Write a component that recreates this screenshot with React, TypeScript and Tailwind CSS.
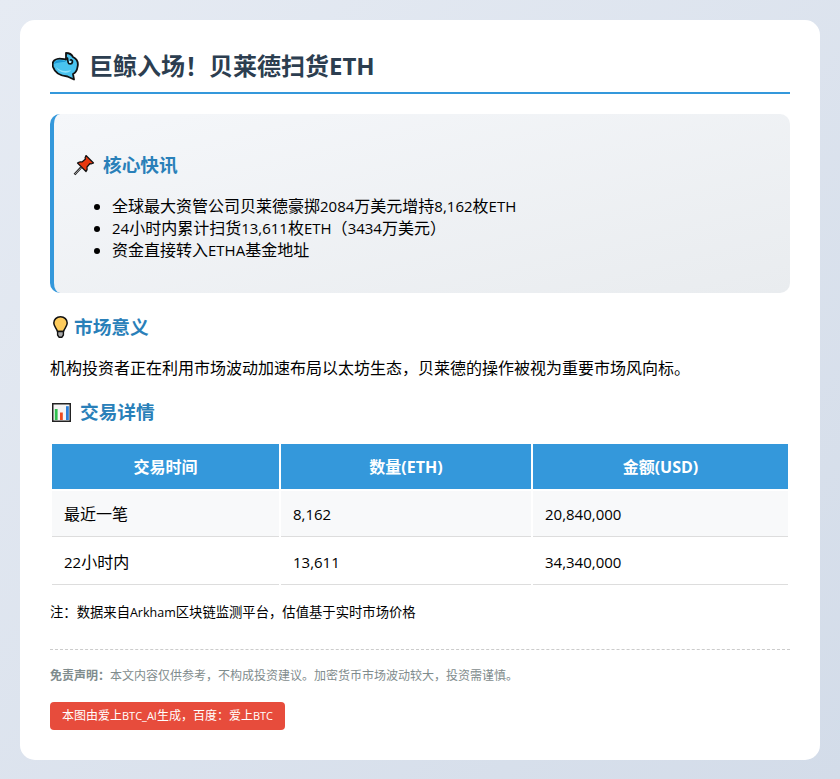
const FONT = "font-['Open_Sans','Noto_Sans_CJK_SC',sans-serif]";

function Whale() {
  return (
    <svg width="28" height="29" viewBox="0 0 28 29" className="ml-[2px] shrink-0">
      <path d="M14 7.5 L14 1 C18 1 20 3 21 5 C25 7 26.5 11 25.5 15 C25 19 23 21 21 22 L22 27.5 L15.5 24.5 C9 24 3 21 1 15 C0 11 1.5 8 5 7 C8 6 11 7 14 7.5 Z" fill="#49c3ef" stroke="#111" strokeWidth="1.8" strokeLinejoin="round" />
      <path d="M2 12 C2.5 9 5 8 8 8 C11 8 13 9 14 10 C10 10 5 10.5 2 12 Z" fill="#1c9ad6" />
      <path d="M4 15 C8 19 13 20 19 18 C17 22 8 22 4 15 Z" fill="#8fe2fb" />
      <path d="M15.5 6 L16 10 C16.5 12.5 20 12.5 20.5 10 C20.8 8.5 19.5 7.5 18.5 8" fill="none" stroke="#111" strokeWidth="1.6" strokeLinecap="round" />
      <circle cx="18" cy="10" r="0.9" fill="#fff" />
    </svg>
  );
}
function Pin() {
  return (
    <svg width="22" height="22" viewBox="0 0 22 22" className="shrink-0">
      <path d="M1.5 20.5 L8 13.5" stroke="#222" strokeWidth="2.4" />
      <path d="M1.8 20.2 L8 13.8" stroke="#bbb" strokeWidth="0.8" />
      <path d="M13 1.5 L20.5 9 L18 10 L17 9.5 L14 13 C14.5 15 14 16.5 13 17.5 L4.5 9 C6 8 7.5 7.5 9 8 L12.5 5 L12 4 Z" fill="#e8380f" stroke="#111" strokeWidth="1.2" strokeLinejoin="round" />
    </svg>
  );
}
function Bulb() {
  return (
    <svg width="15" height="22" viewBox="0 0 15 22" className="ml-[3px] shrink-0">
      <path d="M7.5 0.8 C3.5 0.8 0.8 3.6 0.8 7 C0.8 10.2 3.4 11.8 4.5 15.5 H10.5 C11.6 11.8 14.2 10.2 14.2 7 C14.2 3.6 11.5 0.8 7.5 0.8 Z" fill="#fdcb5c" stroke="#111" strokeWidth="1.5" />
      <path d="M4.6 15.5 H10.4 V19 L9 21.2 H6 L4.6 19 Z" fill="#a8a8a8" stroke="#111" strokeWidth="1.4" strokeLinejoin="round" />
    </svg>
  );
}
function Chart() {
  return (
    <svg width="19" height="19" viewBox="0 0 19 19" className="ml-[2px] shrink-0">
      <rect x="0.75" y="0.75" width="17.5" height="17.5" fill="#f4f4f4" stroke="#222" strokeWidth="1.5" />
      <rect x="2.8" y="6" width="2.8" height="11" fill="#2fc04f" />
      <rect x="8" y="9.5" width="2.8" height="7.5" fill="#ec4a1f" />
      <rect x="14" y="3.2" width="2.8" height="13.8" fill="#2b7fd8" />
    </svg>
  );
}

function L({ children }: { children: string }) {
  return <span className="text-[15px]">{children}</span>;
}

export default function App() {
  const rows = [
    ["最近一笔", "8,162", "20,840,000"],
    ["22小时内", "13,611", "34,340,000"],
  ];
  return (
    <div className={`${FONT} min-h-[779px] bg-gradient-to-br from-[#e6ebf3] to-[#d3dce9] p-5 text-[16px] leading-[24px] text-black`}>
      <div className="flex h-[740px] flex-col rounded-[15px] bg-white px-[30px] pt-[30px]">
        <h1 className="flex h-[44px] items-center gap-[9px] border-b-2 border-[#3498db] pb-[10px] text-[24px] font-bold leading-[32px] text-[#2c3e50]">
          <Whale />
          <span>巨鲸入场！贝莱德扫货ETH</span>
        </h1>

        <section className="mt-[20px] h-[179px] rounded-[10px] border-l-[4px] border-[#3498db] bg-gradient-to-br from-[#f5f7fa] to-[#e9ecef] pl-[20px] pt-[37px]">
          <h2 className="ml-[-1px] flex h-[28px] items-center gap-[8px] text-[18.7px] font-bold text-[#2980b9]">
            <Pin />
            <span>核心快讯</span>
          </h2>
          <ul className="mt-[16px] list-disc pl-[38px] leading-[22px]">
            <li>全球最大资管公司贝莱德豪掷<L>2084</L>万美元增持<L>8,162</L>枚<L>ETH</L></li>
            <li><L>24</L>小时内累计扫货<L>13,611</L>枚<L>ETH</L>（<L>3434</L>万美元）</li>
            <li>资金直接转入<L>ETHA</L>基金地址</li>
          </ul>
        </section>

        <h3 className="mt-[20px] flex h-[28px] items-center gap-[6px] text-[18.7px] font-bold text-[#2980b9]">
          <Bulb />
          <span>市场意义</span>
        </h3>
        <p className="mt-[15px] leading-[24px]">
          机构投资者正在利用市场波动加速布局以太坊生态，贝莱德的操作被视为重要市场风向标。
        </p>

        <h3 className="mt-[18px] flex h-[28px] items-center gap-[9px] text-[18.7px] font-bold text-[#2980b9]">
          <Chart />
          <span>交易详情</span>
        </h3>

        <table className="mt-[16px] w-[740px] table-fixed border-separate border-spacing-[2px]">
          <colgroup>
            <col className="w-[227px]" />
            <col className="w-[250px]" />
            <col className="w-[255px]" />
          </colgroup>
          <thead>
            <tr className="h-[45px] bg-[#3498db] font-bold text-white">
              <th className="text-center font-bold">交易时间</th>
              <th className="text-center font-bold">数量(ETH)</th>
              <th className="text-center font-bold">金额(USD)</th>
            </tr>
          </thead>
          <tbody>
            {rows.map((r, i) => (
              <tr key={r[0]} className={i === 0 ? "h-[46px] bg-[#f8f9fa]" : "h-[46px] bg-white"}>
                <td className="border-b border-[#dddddd] px-3">
                  {i === 0 ? r[0] : <><L>22</L>小时内</>}
                </td>
                <td className="border-b border-[#dddddd] px-3 text-[15px]">{r[1]}</td>
                <td className="border-b border-[#dddddd] px-3 text-[15px]">{r[2]}</td>
              </tr>
            ))}
          </tbody>
        </table>

        <p className="mt-[13px] text-[13.33px] leading-[24px]">
          注：数据来自<span className="text-[12.5px]">Arkham</span>区块链监测平台，估值基于实时市场价格
        </p>

        <div className="mt-[24px] border-t border-dashed border-[#cccccc] pt-[17px] text-[12px] leading-[18px] text-[#7f8c8d]">
          <strong className="font-bold">免责声明：</strong>本文内容仅供参考，不构成投资建议。加密货币市场波动较大，投资需谨慎。
        </div>

        <div className="mt-[17px] flex h-[28px] w-[235px] items-center justify-center rounded-[4px] bg-[#e74c3c] text-[12px] text-white">
          <span>本图由爱上<span className="text-[11px]">BTC_AI</span>生成，百度：爱上<span className="text-[11px]">BTC</span></span>
        </div>
      </div>
    </div>
  );
}
